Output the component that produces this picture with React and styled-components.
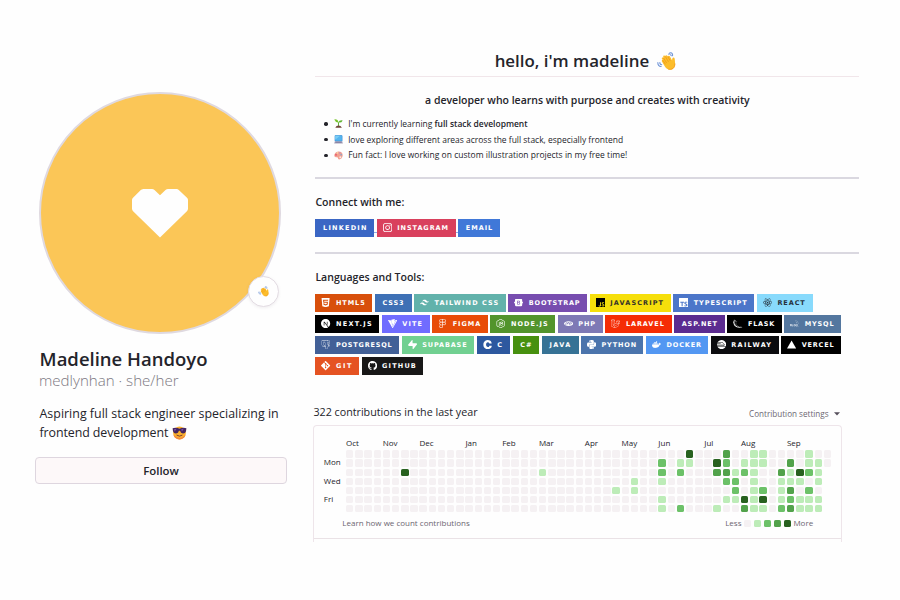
import React from 'react';
import styled, { createGlobalStyle } from 'styled-components';
import {
  SiInstagram, SiHtml5, SiTailwindcss, SiBootstrap, SiJavascript, SiTypescript, SiReact,
  SiNextdotjs, SiVite, SiFigma, SiNodedotjs, SiPhp, SiLaravel, SiFlask, SiMysql,
  SiPostgresql, SiSupabase, SiC, SiPython, SiDocker, SiRailway, SiVercel, SiGit, SiGithub,
} from 'react-icons/si';

const Global = createGlobalStyle`
  * { box-sizing: border-box; }
  body {
    margin: 0;
    background: #fefefe;
    color: #24242b;
    font-family: "Open Sans", "Noto Sans", sans-serif;
  }
`;

const Page = styled.div`
  width: 900px;
  height: 600px;
  display: grid;
  grid-template-columns: 252px 546px;
  column-gap: 26.4px;
  padding-left: 35px;
  overflow: hidden;
`;

const Sidebar = styled.aside`
  padding-top: 92px;
  white-space: nowrap;
`;

const Avatar = styled.div`
  position: relative;
  width: 242px;
  height: 242px;
  margin-left: 4px;
  border: 2px solid #dfd9e0;
  border-radius: 50%;
  background: #fbc657;
  display: grid;
  place-items: center;
  svg { display: block; }
`;

const Status = styled.div`
  position: absolute;
  left: 207px;
  top: 182px;
  width: 31px;
  height: 31px;
  border-radius: 50%;
  border: 1px solid #e3dce3;
  background: #fefefe;
  box-shadow: 0 1px 3px rgba(120, 100, 120, 0.1);
  display: grid;
  place-items: center;
`;

const Name = styled.h1`
  margin: 13px 0 0 4.6px;
  font-size: 18.5px;
  font-weight: 600;
  line-height: 24px;
`;

const Login = styled.div`
  margin: -1px 0 0 4px;
  font-size: 15.1px;
  font-weight: 300;
  line-height: 20px;
  color: #7d7982;
`;

const Bio = styled.p`
  display: grid;
  margin: 13.5px 0 0 4.5px;
  font-size: 12.4px;
  line-height: 19.6px;
`;

const BioLine = styled.span`
  display: flex;
  align-items: center;
  gap: 3.5px;
  letter-spacing: ${(p) => p.$track || 0}px;
`;

const FollowButton = styled.button`
  display: block;
  width: 252px;
  height: 27px;
  margin-top: 14.5px;
  padding: 0;
  border: 1px solid #ded6df;
  border-radius: 4px;
  background: #fdf8f9;
  color: #24242b;
  font: 600 11.4px/26px "Open Sans", sans-serif;
`;

const Main = styled.main`
  padding-top: 49px;
  white-space: nowrap;
`;

const Readme = styled.section`
  width: 544px;
  margin-left: 2px;
`;

const Title = styled.h2`
  display: flex;
  justify-content: center;
  align-items: center;
  gap: 8px;
  height: 28px;
  margin: 0;
  padding: 0 4px 3px 0;
  border-bottom: 1px solid #f1e6ea;
  font-size: 16.9px;
  font-weight: 600;
  line-height: 24px;
`;

const Tagline = styled.h3`
  margin: 15px 0 8px;
  text-align: center;
  font-size: 10.5px;
  font-weight: 600;
  line-height: 16px;
`;

const Facts = styled.ul`
  margin: 0;
  padding: 0;
  list-style: none;
  font-size: 8.47px;
  line-height: 15.7px;
`;

const Fact = styled.li`
  display: grid;
  grid-template-columns: 4px 9px auto;
  column-gap: 5.4px;
  align-items: center;
  padding-left: 9px;
  height: 15.7px;
  letter-spacing: ${(p) => p.$track || 0}px;
  &::before {
    content: "";
    width: 3.4px;
    height: 3.4px;
    border-radius: 50%;
    background: #24242b;
  }
  b { font-weight: 600; }
  svg { display: block; }
`;

const Rule = styled.hr`
  height: 2px;
  margin: ${(p) => p.$top}px 0 0;
  border: 0;
  background: #dad8e0;
`;

const Heading = styled.h3`
  margin: 15px 0 8.7px;
  font-size: 10.55px;
  font-weight: 600;
  line-height: 16px;
`;

const BadgeRows = styled.div`
  display: grid;
  row-gap: 3.1px;
`;

const BadgeRow = styled.div`
  display: flex;
  column-gap: ${(p) => (p.$linked ? 0 : 2.35)}px;
`;

const LinkGap = styled.span`
  width: 2.4px;
  height: 14px;
  border-bottom: 1px solid #8fabe4;
`;

const BadgeBox = styled.span`
  display: flex;
  flex: none;
  align-items: center;
  gap: 5.4px;
  width: ${(p) => p.$w}px;
  height: 18px;
  padding-left: ${(p) => (p.$plain ? 7.7 : 6)}px;
  background: ${(p) => p.$bg};
  color: ${(p) => p.$fg};
  font: bold 6.5px/18px "DejaVu Sans", sans-serif;
  letter-spacing: ${(p) => p.$track}px;
  svg { flex: none; width: 9.2px; height: 9.2px; color: ${(p) => p.$ic}; }
`;

const Badge = ({ label, w, bg, track = 1, icon: Icon, fg = '#fff', ic = fg }) => (
  <BadgeBox $w={w} $bg={bg} $fg={fg} $ic={ic} $track={track} $plain={!Icon}>
    {Icon && <Icon />}
    {label}
  </BadgeBox>
);

const TOOLS = [
  [
    { label: 'HTML5', w: 57, bg: '#d84f0b', track: 0.92, icon: SiHtml5 },
    { label: 'CSS3', w: 36.8, bg: '#3e70b5', track: 0.85 },
    { label: 'TAILWIND CSS', w: 92, bg: '#62b2ab', track: 1.09, icon: SiTailwindcss },
    { label: 'BOOTSTRAP', w: 79.2, bg: '#774daf', track: 0.8, icon: SiBootstrap },
    { label: 'JAVASCRIPT', w: 81, bg: '#f6df0b', track: 1.11, icon: SiJavascript, fg: '#34332b', ic: '#000' },
    { label: 'TYPESCRIPT', w: 81.4, bg: '#4c76c9', track: 0.96, icon: SiTypescript },
    { label: 'REACT', w: 55.9, bg: '#88dafc', track: 0.93, icon: SiReact, fg: '#26313c' },
  ],
  [
    { label: 'NEXT.JS', w: 64, bg: '#000', track: 1.3, icon: SiNextdotjs },
    { label: 'VITE', w: 48, bg: '#706cff', track: 1.13, icon: SiVite },
    { label: 'FIGMA', w: 56, bg: '#e84c08', track: 1, icon: SiFigma },
    { label: 'NODE.JS', w: 65, bg: '#52942c', track: 1.05, icon: SiNodedotjs },
    { label: 'PHP', w: 45.2, bg: '#7e79b5', track: 0.85, icon: SiPhp },
    { label: 'LARAVEL', w: 66.4, bg: '#f52c05', track: 0.92, icon: SiLaravel },
    { label: 'ASP.NET', w: 51, bg: '#5b2b90', track: 0.87 },
    { label: 'FLASK', w: 54.5, bg: '#000', track: 0.75, icon: SiFlask },
    { label: 'MYSQL', w: 56.8, bg: '#54779f', track: 0.8, icon: SiMysql },
  ],
  [
    { label: 'POSTGRESQL', w: 84, bg: '#426097', track: 0.79, icon: SiPostgresql },
    { label: 'SUPABASE', w: 72.7, bg: '#71d091', track: 0.86, icon: SiSupabase },
    { label: 'C', w: 33.5, bg: '#2d589f', icon: SiC },
    { label: 'C#', w: 26.8, bg: '#47900f' },
    { label: 'JAVA', w: 36.8, bg: '#367295', track: 1.4 },
    { label: 'PYTHON', w: 62.6, bg: '#4b74ac', track: 0.88, icon: SiPython },
    { label: 'DOCKER', w: 62.6, bg: '#5397f2', track: 0.9, icon: SiDocker },
    { label: 'RAILWAY', w: 68, bg: '#0b0c0f', track: 1.27, icon: SiRailway },
    { label: 'VERCEL', w: 60.2, bg: '#000', track: 0.82, icon: SiVercel },
  ],
  [
    { label: 'GIT', w: 43.8, bg: '#e55322', track: 1.6, icon: SiGit },
    { label: 'GITHUB', w: 61.8, bg: '#181717', track: 1.16, icon: SiGithub },
  ],
];

const Activity = styled.section`
  width: 528.6px;
  margin-top: 28.4px;
`;

const ActivityHead = styled.div`
  display: flex;
  justify-content: space-between;
  align-items: center;
  height: 22px;
  padding-right: 2.4px;
`;

const Count = styled.span`
  font-size: 10.72px;
  line-height: 16px;
  padding-bottom: 5px;
`;

const Settings = styled.span`
  display: flex;
  align-items: center;
  gap: 5px;
  font-size: 8.12px;
  line-height: 16px;
  padding-bottom: 1px;
  color: #6c6671;
`;

const Card = styled.div`
  height: 117px;
  border: 1.5px solid #eee5ea;
  border-bottom: 0;
  border-radius: 4px 4px 0 0;
`;

const CardBody = styled.div`
  height: 112.5px;
  padding: 11px 9px 0 9.6px;
  border-bottom: 1px solid #eae2e6;
`;

const Calendar = styled.div`
  display: grid;
  grid-template-columns: 22.4px repeat(53, 7.4px);
  grid-template-rows: 11.2px repeat(7, 7.4px);
  column-gap: 1.81px;
  row-gap: 1.76px;
  grid-auto-flow: column;
  margin-left: -2.2px;
  font-size: 8px;
`;

const Month = styled.span`
  grid-row: 1;
  grid-column: ${(p) => p.$week + 2};
  width: 0;
  line-height: 12px;
`;

const Day = styled.span`
  grid-column: 1;
  grid-row: ${(p) => p.$row + 2};
  height: 7.4px;
  padding-left: 2px;
  line-height: 6.6px;
`;

const LEVELS = ['#f5f1f3', '#bdecb8', '#6cc168', '#52a24b', '#28611f'];

const Cell = styled.span`
  grid-column: ${(p) => p.$week + 2};
  grid-row: ${(p) => p.$row + 2};
  border-radius: 1.6px;
  background: ${(p) => LEVELS[p.$level]};
`;

const CardFoot = styled.div`
  display: flex;
  justify-content: space-between;
  align-items: center;
  margin: 3px 18.8px 0 18.3px;
  font-size: 8.01px;
  line-height: 16px;
  color: #6c6671;
`;

const Legend = styled.div`
  display: flex;
  align-items: center;
  gap: 2.5px;
`;

const Swatch = styled.i`
  width: 7.4px;
  height: 7.4px;
  border-radius: 1.6px;
  background: ${(p) => LEVELS[p.$level]};
`;

const MONTHS = [
  ['Oct', 0], ['Nov', 4], ['Dec', 8], ['Jan', 13], ['Feb', 17], ['Mar', 21],
  ['Apr', 26], ['May', 30], ['Jun', 34], ['Jul', 39], ['Aug', 43], ['Sep', 48],
];

// One string per active week, Sunday to Saturday, each digit an activity level.
const WEEKS = {
  6: '0040000', 21: '0010000', 29: '0000100', 31: '0001100', 34: '0221011',
  36: '0120002', 37: '4100000', 40: '0430001', 41: '3232010', 42: '0012210',
  43: '0120043', 44: '1111111', 45: '1100241', 47: '0031112', 48: '0311323',
  49: '0041011', 50: '1120211', 51: '0111011', 52: '00',
};

const CELLS = Array.from({ length: 53 }, (_, week) =>
  [...(WEEKS[week] || '0000000')].map((level, row) => ({ week, row, level: +level }))
).flat();

const Heart = () => (
  <svg width="56" height="49" viewBox="0 0 56 49">
    <path
      fill="#fefefe"
      d="M9.8.4Q10.4 0 11.4 0H20Q21.4 0 22.5.9L28 6.2 33.5.9Q34.6 0 36 0H44.6Q45.8 0 46.8.9L55 8.7Q56 9.7 56 11V19.5Q56 21.2 54.9 22.3L28 48.6 1.1 22.3Q0 21.2 0 19.5V11Q0 9.7 1 8.7L8.8 1.1Z"
    />
  </svg>
);

const WaveHand = ({ size }) => (
  <svg width={size} height={size} viewBox="0 0 20 20" fill="none" strokeLinecap="round">
    <path d="M12.6 2.6Q12.6.8 14.4.9 16.8 1.2 16.4 4M14.2 3Q14.9 2.9 15 3.9M.9 11.2Q.8 14.9 4.4 15.2M3 11Q2.9 13.2 5 13.4" stroke="#6c92d6" strokeWidth="1.1" />
    <path
      fill="#fcbd2b"
      d="M5.2 7.4C4.6 6.2 6 5.2 6.9 6.2L6.6 5C6.1 3.7 7.7 3 8.4 4.1L8.8 4.8C8.6 3.3 10.2 2.8 10.9 4L11.4 4.9C11.6 3.8 12.9 3.6 13.5 4.6L15.9 8.9C16 7 16 5.8 17.4 5.7 18.7 5.7 18.7 7.3 18.8 8.6L19.1 12.5C19.2 17.2 15.7 19.3 12.2 18.4 9.7 17.7 8.5 15.9 7.5 14L5.2 10C4.6 8.9 5.7 7.9 6.5 8.9Z"
    />
    <path d="M7 6.5 10 11.3M8.9 4.9 11.9 10M11.5 5 13.7 8.9M6.3 9 8.7 12.6" stroke="#ec9314" strokeWidth="0.7" />
    <path d="M18.8 12.5C19 16.8 15.6 19 12.2 18.1" stroke="#f39b25" strokeWidth="0.9" />
  </svg>
);

const Seedling = () => (
  <svg width="9" height="9" viewBox="0 0 9 9">
    <path d="M4.5 7.3V3.3" stroke="#55a52b" strokeWidth="0.9" />
    <path d="M4.5 3.4Q1.6 3.7.3.4 3.9 0 4.5 3.4Z" fill="#79c52c" />
    <path d="M4.4 3.5Q5.1.8 8.7 1.4 7.5 4.1 4.4 3.5Z" fill="#5fb32f" />
    <path d="M1.3 8.8Q2.2 6.5 4.5 6.5T7.9 8.8Z" fill="#704638" />
  </svg>
);

const Laptop = () => (
  <svg width="9" height="9" viewBox="0 0 9 9">
    <rect x="0.7" y="0.3" width="7.7" height="6.1" rx="0.6" fill="#2984d2" />
    <path d="M1.2.8H7.9V5.8H1.2Z" fill="#55b5ee" />
    <path d="M1.2.8H6L1.2 4.8Z" fill="#7bcdf5" />
    <path d="M.8 6.5H8.3L8.9 8.6H.2Z" fill="#a7a2ba" />
    <path d="M1.5 6.8H7.6V7.5H1.3Z" fill="#716b91" />
  </svg>
);

const Palette = () => (
  <svg width="9" height="9" viewBox="0 0 9 9">
    <path d="M4.2.4C7 .2 8.8 1.9 8.7 4.3 8.6 6.6 7 8.5 5 8.4 3.6 8.2 4.5 6.6 3.3 6.2 2.3 5.9.6 6.8.3 4.8.2 2.5 1.8.6 4.2.4Z" fill="#f2a08f" />
    <circle cx="2" cy="3.8" r="0.9" fill="#e8506d" />
    <circle cx="3.5" cy="1.9" r="0.8" fill="#fbd5a8" />
    <circle cx="5.8" cy="2" r="0.8" fill="#b98bcb" />
    <circle cx="7.2" cy="3.8" r="0.8" fill="#78a8d8" />
    <circle cx="6.3" cy="6.2" r="1" fill="#fae9e4" />
  </svg>
);

const CoolFace = () => (
  <svg width="15" height="14" viewBox="0 0 15 14">
    <circle cx="7.5" cy="7" r="6.4" fill="#fbb02d" />
    <path d="M1.3 8.6A6.4 6.4 0 0 0 13.7 8.6Q11 12 7.5 11.9T1.3 8.6Z" fill="#f28840" />
    <path d="M.6 2.2Q4 .9 7.5 2.8 11 .9 14.4 2.2L14 5.2Q13.3 7.6 10.9 7.5 8.6 7.3 8.1 4.8H6.9Q6.4 7.3 4.1 7.5 1.7 7.6 1 5.2Z" fill="#45265f" />
    <path d="M2 3.3 4.6 2.8 2.7 5.5ZM9.2 3.3 11.8 2.8 9.9 5.5Z" fill="#8052a6" />
    <path d="M4.9 9.3Q7.5 11.2 10.1 9.3" stroke="#6d3034" strokeWidth="0.9" fill="none" strokeLinecap="round" />
  </svg>
);

const Caret = () => (
  <svg width="6" height="4" viewBox="0 0 6 4">
    <path d="M0 .2H6L3 3.6Z" fill="#57505c" />
  </svg>
);

export default function App() {
  return (
    <>
      <Global />
      <Page>
        <Sidebar>
          <Avatar>
            <Heart />
            <Status><WaveHand size={11} /></Status>
          </Avatar>
          <Name>Madeline Handoyo</Name>
          <Login>medlynhan · she/her</Login>
          <Bio>
            <BioLine $track={0.02}>Aspiring full stack engineer specializing in</BioLine>
            <BioLine $track={-0.08}>frontend development <CoolFace /></BioLine>
          </Bio>
          <FollowButton>Follow</FollowButton>
        </Sidebar>
        <Main>
          <Readme>
            <Title>hello, i'm madeline <WaveHand size={19} /></Title>
            <Tagline>a developer who learns with purpose and creates with creativity</Tagline>
            <Facts>
              <Fact><Seedling /><span>I'm currently learning <b>full stack development</b></span></Fact>
              <Fact><Laptop /><span>love exploring different areas across the full stack, especially frontend</span></Fact>
              <Fact $track={0.03}><Palette /><span>Fun fact: I love working on custom illustration projects in my free time!</span></Fact>
            </Facts>
            <Rule $top={13.9} />
            <Heading>Connect with me:</Heading>
            <BadgeRow $linked>
              <Badge label="LINKEDIN" w={58.8} bg="#3a66c4" track={1.23} />
              <LinkGap />
              <Badge label="INSTAGRAM" w={79.2} bg="#d9405d" track={0.94} icon={SiInstagram} />
              <LinkGap />
              <Badge label="EMAIL" w={42} bg="#4078d8" track={0.95} />
            </BadgeRow>
            <Rule $top={15.3} />
            <Heading>Languages and Tools:</Heading>
            <BadgeRows>
              {TOOLS.map((row, i) => (
                <BadgeRow key={i}>
                  {row.map((tool) => <Badge key={tool.label} {...tool} />)}
                </BadgeRow>
              ))}
            </BadgeRows>
          </Readme>
          <Activity>
            <ActivityHead>
              <Count>322 contributions in the last year</Count>
              <Settings>Contribution settings <Caret /></Settings>
            </ActivityHead>
            <Card>
              <CardBody>
                <Calendar>
                  {MONTHS.map(([name, week]) => <Month key={name} $week={week}>{name}</Month>)}
                  <Day $row={1}>Mon</Day>
                  <Day $row={3}>Wed</Day>
                  <Day $row={5}>Fri</Day>
                  {CELLS.map((c) => (
                    <Cell key={`${c.week}-${c.row}`} $week={c.week} $row={c.row} $level={c.level} />
                  ))}
                </Calendar>
                <CardFoot>
                  <span>Learn how we count contributions</span>
                  <Legend>
                    Less
                    {LEVELS.map((_, level) => <Swatch key={level} $level={level} />)}
                    More
                  </Legend>
                </CardFoot>
              </CardBody>
            </Card>
          </Activity>
        </Main>
      </Page>
    </>
  );
}
